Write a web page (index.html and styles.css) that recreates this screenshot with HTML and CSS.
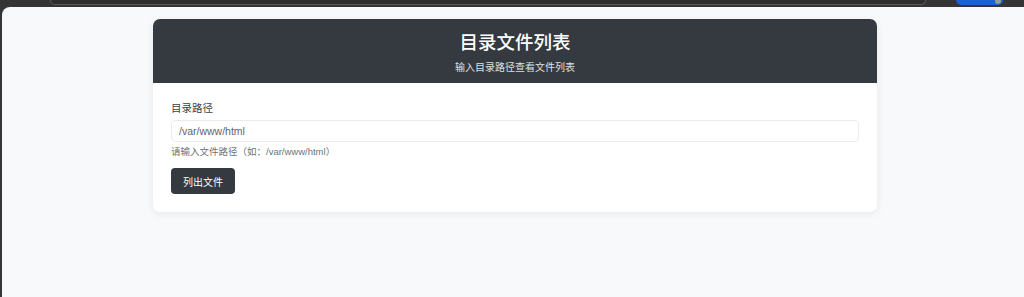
FILE: index.html
```html
<!DOCTYPE html>
<html lang="zh-CN">
<head>
    <meta charset="UTF-8">
    <meta name="viewport" content="width=device-width, initial-scale=1.0">
    <title>目录文件列表</title>
    <link rel="stylesheet" href="styles.css">
</head>
<body>

<!-- 浏览器顶部 -->
<div class="chrome">
    <div class="address"></div>
    <div class="profile"><span></span></div>
</div>

<div class="window">
    <main class="page">
        <div class="card">
            <div class="card-header">
                <h1>目录文件列表</h1>
                <p>输入目录路径查看文件列表</p>
            </div>
            <div class="card-body">
                <label for="dirPath">目录路径</label>
                <input type="text" id="dirPath" value="/var/www/html">
                <div class="hint">请输入文件路径（如：/var/www/html）</div>
                <button>列出文件</button>
            </div>
        </div>
    </main>
</div>

</body>
</html>
```

FILE: styles.css
```css
body {
    font-family: 'Liberation Sans', 'Noto Sans CJK SC', sans-serif;
    background-color: #353535;
    margin: 0;
    padding: 0;
    height: 297px;
    display: flex;
    flex-direction: column;
    overflow: hidden;
}

.chrome {
    height: 7px;
    flex: none;
    display: flex;
    align-items: flex-start;
}

.address {
    margin-left: 50px;
    width: 874px;
    height: 4px;
    border: 1px solid #5a5a5a;
    border-top: none;
    border-radius: 0 0 6px 6px;
    background-color: #2e2e2e;
}

.profile {
    margin-left: 30px;
    width: 47px;
    height: 5px;
    background-color: #1f5fd6;
    border-radius: 0 0 8px 8px;
    position: relative;
}

.profile span {
    position: absolute;
    right: 2px;
    top: 0;
    width: 6px;
    height: 4px;
    border-radius: 0 0 3px 3px;
    background-color: #9a9a9a;
}

.window {
    flex: 1;
    display: flex;
    padding-left: 2px;
}

.page {
    flex: 1;
    background-color: #f8f9fa;
    border-top-left-radius: 8px;
    padding-top: 12px;
    display: flex;
    justify-content: center;
    align-items: flex-start;
}

.card {
    width: 724px;
    margin-left: 4px;
    background-color: white;
    border-radius: 7px;
    box-shadow: 0 2px 8px rgba(0, 0, 0, 0.07);
    overflow: hidden;
}

.card-header {
    background-color: #343a40;
    color: white;
    text-align: center;
    height: 64px;
    box-sizing: border-box;
    padding-top: 13px;
}

.card-header h1 {
    margin: 0;
    font-size: 18.5px;
    line-height: 22px;
    font-weight: 500;
}

.card-header p {
    margin: 7px 0 0;
    font-size: 10px;
    line-height: 14px;
    color: #dfe1e3;
}

.card-body {
    padding: 18px;
    display: flex;
    flex-direction: column;
    align-items: flex-start;
}

label {
    font-size: 10.5px;
    line-height: 14px;
    color: #3a3f44;
    font-weight: 400;
    margin-bottom: 5px;
}

input {
    width: 100%;
    height: 22px;
    box-sizing: border-box;
    padding: 0 7px;
    border: 1px solid #e9ecef;
    border-radius: 4px;
    font-family: inherit;
    font-size: 10.5px;
    color: #5f666d;
    outline: none;
}

.hint {
    margin-top: 4px;
    font-size: 9.5px;
    line-height: 12px;
    color: #6c757d;
}

button {
    margin-top: 10px;
    height: 26px;
    padding: 0 12px;
    background-color: #343a40;
    color: white;
    border: none;
    border-radius: 4px;
    font-family: inherit;
    font-size: 10px;
    cursor: pointer;
}
```
